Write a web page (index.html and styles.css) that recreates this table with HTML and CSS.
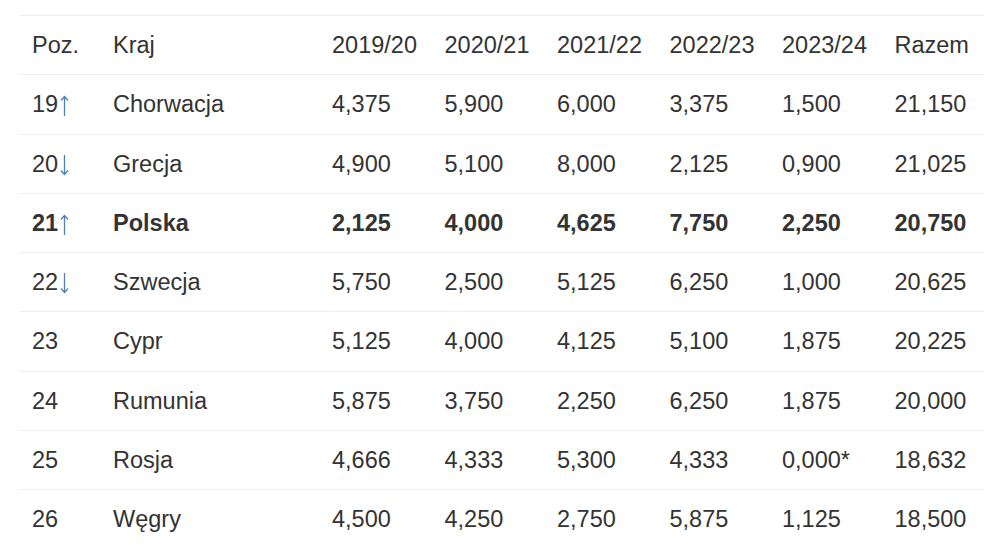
FILE: index.html
```html
<!DOCTYPE html>
<html lang="pl">
<head>
<meta charset="utf-8">
<title>Ranking</title>
<link rel="stylesheet" href="styles.css">
</head>
<body>
<table class="ranking">
  <colgroup>
    <col class="c-poz"><col class="c-kraj"><col class="c-num"><col class="c-num"><col class="c-num"><col class="c-num"><col class="c-num"><col class="c-num">
  </colgroup>
  <thead>
    <tr><th>Poz.</th><th>Kraj</th><th>2019/20</th><th>2020/21</th><th>2021/22</th><th>2022/23</th><th>2023/24</th><th>Razem</th></tr>
  </thead>
  <tbody>
    <tr><td>19<svg class="arrow" viewBox="0 0 9 21" aria-label="↑"><path d="M4.5 1.5V21M1 5.5L4.5 1.5L8 5.5"/></svg></td><td>Chorwacja</td><td>4,375</td><td>5,900</td><td>6,000</td><td>3,375</td><td>1,500</td><td>21,150</td></tr>
    <tr><td>20<svg class="arrow" viewBox="0 0 9 21" aria-label="↓"><path d="M4.5 0V19.5M1 15.5L4.5 19.5L8 15.5"/></svg></td><td>Grecja</td><td>4,900</td><td>5,100</td><td>8,000</td><td>2,125</td><td>0,900</td><td>21,025</td></tr>
    <tr class="own"><td>21<svg class="arrow" viewBox="0 0 9 21" aria-label="↑"><path d="M4.5 1.5V21M1 5.5L4.5 1.5L8 5.5"/></svg></td><td>Polska</td><td>2,125</td><td>4,000</td><td>4,625</td><td>7,750</td><td>2,250</td><td>20,750</td></tr>
    <tr><td>22<svg class="arrow" viewBox="0 0 9 21" aria-label="↓"><path d="M4.5 0V19.5M1 15.5L4.5 19.5L8 15.5"/></svg></td><td>Szwecja</td><td>5,750</td><td>2,500</td><td>5,125</td><td>6,250</td><td>1,000</td><td>20,625</td></tr>
    <tr><td>23</td><td>Cypr</td><td>5,125</td><td>4,000</td><td>4,125</td><td>5,100</td><td>1,875</td><td>20,225</td></tr>
    <tr><td>24</td><td>Rumunia</td><td>5,875</td><td>3,750</td><td>2,250</td><td>6,250</td><td>1,875</td><td>20,000</td></tr>
    <tr><td>25</td><td>Rosja</td><td>4,666</td><td>4,333</td><td>5,300</td><td>4,333</td><td>0,000*</td><td>18,632</td></tr>
    <tr><td>26</td><td>Węgry</td><td>4,500</td><td>4,250</td><td>2,750</td><td>5,875</td><td>1,125</td><td>18,500</td></tr>
  </tbody>
</table>
</body>
</html>
```
FILE: styles.css
```css
html, body {
  margin: 0;
  padding: 0;
  background: #fff;
  overflow: hidden;
}
body {
  padding: 15px 0 0 19px;
  font-family: "Liberation Sans", Arial, sans-serif;
  font-size: 23.5px;
  color: #333;
}
.ranking {
  border-collapse: collapse;
  table-layout: fixed;
  width: 975px;
}
.c-poz { width: 81px; }
.c-kraj { width: 219px; }
.c-num { width: 112.5px; }
.ranking th,
.ranking td {
  text-align: left;
  font-weight: normal;
  padding: 12px 13px;
  line-height: 34.25px;
  border-top: 1px solid #eeeeee;
  white-space: nowrap;
}
.ranking tr.own td {
  font-weight: bold;
}
.arrow {
  width: 9px;
  height: 21px;
  margin-left: 2px;
  vertical-align: -4px;
  fill: none;
  stroke: #4d7fb3;
  stroke-width: 1.3;
}
```
